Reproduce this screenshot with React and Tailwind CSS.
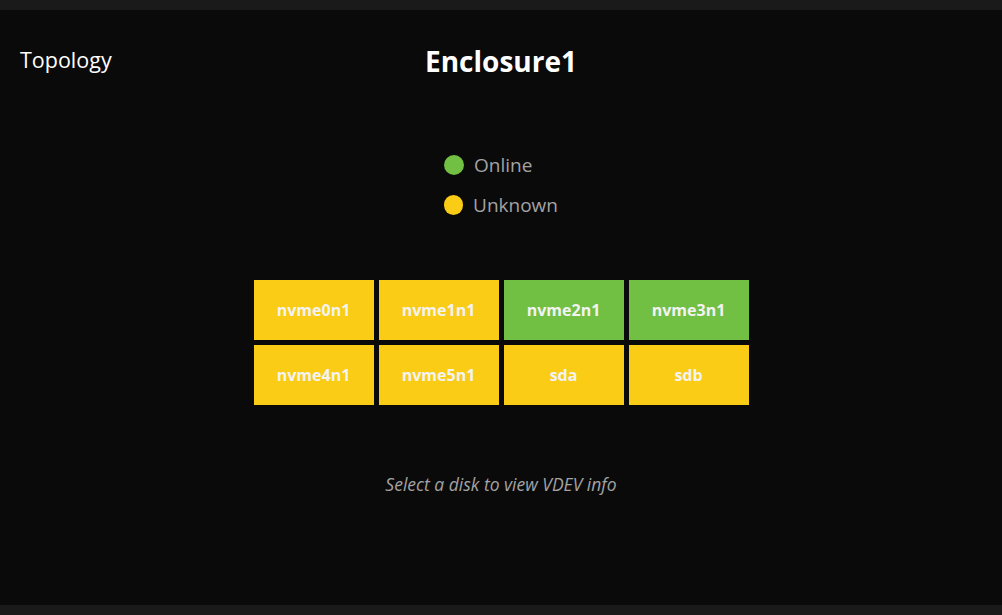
import React from 'react';

const disks = [
  { name: 'nvme0n1', status: 'unknown' },
  { name: 'nvme1n1', status: 'unknown' },
  { name: 'nvme2n1', status: 'online' },
  { name: 'nvme3n1', status: 'online' },
  { name: 'nvme4n1', status: 'unknown' },
  { name: 'nvme5n1', status: 'unknown' },
  { name: 'sda', status: 'unknown' },
  { name: 'sdb', status: 'unknown' },
];

const tone = {
  online: 'bg-[#71c044]',
  unknown: 'bg-[#facc15]',
};

export default function App() {
  return (
    <div className="flex h-[615px] w-full flex-col bg-[#0a0a0a] font-['Open_Sans',sans-serif]">
      <div className="h-[10px] bg-[#1a1a1a]" />

      <div className="flex flex-1 flex-col">
        {/* header */}
        <div className="grid grid-cols-[1fr_auto_1fr] items-center px-5 pt-[33px]">
          <h2 className="-mt-[3px] text-[21.5px] leading-[34px] text-white">Topology</h2>
          <h1 className="text-[28px] font-bold leading-[36px] text-white">Enclosure1</h1>
          <div />
        </div>

        {/* legend */}
        <div className="mt-[74px] flex flex-col items-center">
          <div className="flex w-[114px] flex-col gap-[16px]">
            <div className="flex items-center gap-[10px]">
              <span className="h-5 w-5 rounded-full bg-[#71c044]" />
              <span className="text-[19px] leading-6 text-[#a3a3a3]">Online</span>
            </div>
            <div className="flex items-center gap-[10px]">
              <span className="h-5 w-5 rounded-full bg-[#facc15]" />
              <span className="text-[19px] leading-6 text-[#a3a3a3]">Unknown</span>
            </div>
          </div>
        </div>

        {/* disks */}
        <div className="mt-[63px] flex justify-center">
          <div className="grid grid-cols-4 gap-[5px]">
            {disks.map((d) => (
              <button
                key={d.name}
                className={`flex h-[60px] w-[120px] items-center justify-center text-[16px] font-bold text-[#f3f3f3] ${tone[d.status]}`}
              >
                {d.name}
              </button>
            ))}
          </div>
        </div>

        <p className="mt-[67px] text-center text-[17.5px] italic leading-6 text-[#a3a3a3]">
          Select a disk to view VDEV info
        </p>
      </div>

      <div className="h-[10px] bg-[#1a1a1a]" />
    </div>
  );
}
